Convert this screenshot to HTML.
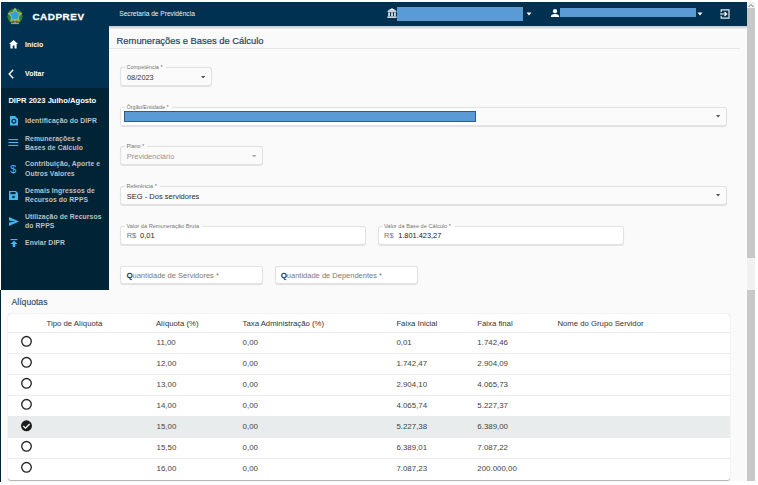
<!DOCTYPE html>
<html><head><meta charset="utf-8"><style>
html,body{margin:0;padding:0;background:#fff;width:758px;height:485px;overflow:hidden;font-family:"Liberation Sans", sans-serif;}
</style></head><body>
<div style="position:absolute;left:1px;top:2px;width:746px;height:24px;background:#013150"></div>
<div style="position:absolute;left:1px;top:26px;width:108px;height:62px;background:#013150"></div>
<div style="position:absolute;left:1px;top:88px;width:108px;height:202px;background:#012336"></div>
<div style="position:absolute;left:109px;top:26px;width:638px;height:264px;background:#fafafa"></div>
<div style="position:absolute;left:0px;top:290px;width:1.3px;height:191.5px;background:#012336"></div>
<div style="position:absolute;left:1.3px;top:290px;width:745.7px;height:191px;background:#fafafa"></div>
<div style="position:absolute;left:1.3px;top:290px;width:6.5px;height:191px;background:#fdfdfe"></div>
<div style="position:absolute;left:747px;top:2px;width:8px;height:479px;background:#f1f1f1"></div>
<div style="position:absolute;left:747px;top:8px;width:8px;height:250px;background:#c8c8c8"></div>
<div style="position:absolute;left:747px;top:290px;width:8px;height:191px;background:#c8c8c8"></div>
<svg style="position:absolute;left:748px;top:3px" width="6" height="5" viewBox="0 0 6 5"><path d="M0.5 4 L3 1.5 L5.5 4" fill="none" stroke="#777" stroke-width="1"/></svg>
<svg style="position:absolute;left:6px;top:6.5px" width="18" height="18" viewBox="0 0 18 18">
<ellipse cx="9" cy="9.2" rx="7.6" ry="7.8" fill="#23853a"/>
<polygon points="9.00,0.60 11.53,4.92 16.42,5.99 13.09,9.73 13.58,14.71 9.00,12.70 4.42,14.71 4.91,9.73 1.58,5.99 6.47,4.92" fill="#e0b028"/>
<polygon points="9.00,2.40 11.00,5.65 14.71,6.55 12.23,9.45 12.53,13.25 9.00,11.80 5.47,13.25 5.77,9.45 3.29,6.55 7.00,5.65" fill="#3cb0d0"/>
<circle cx="9" cy="8.4" r="3.3" fill="#2e9ee6"/>
<rect x="8.2" y="13" width="1.6" height="3" fill="#8ad0f0"/>
<path d="M6.3 15.6 L11.7 15.6 L9 13.6 Z" fill="#d04040"/>
<path d="M5 16.6 L13 16.6" stroke="#e0b028" stroke-width="0.9"/>
</svg>
<div style="position:absolute;left:32.4px;top:12.22px;font-size:9.9px;line-height:9.9px;color:#fff;font-weight:bold;white-space:nowrap;letter-spacing:0.55px;-webkit-text-stroke:0.3px #fff">CADPREV</div>
<div style="position:absolute;left:119.3px;top:10.81px;font-size:6.6px;line-height:6.6px;color:#eef2f5;font-weight:normal;white-space:nowrap;">Secretaria de Previdência</div>
<svg style="position:absolute;left:387px;top:8px" width="10" height="10" viewBox="0 0 10 10">
<path d="M5 0.3 L9.6 2.8 L0.4 2.8 Z" fill="#fff"/>
<rect x="0.6" y="3.2" width="8.8" height="0.9" fill="#fff"/>
<rect x="1.3" y="4.4" width="1.5" height="3.6" fill="#fff"/>
<rect x="4.25" y="4.4" width="1.5" height="3.6" fill="#fff"/>
<rect x="7.2" y="4.4" width="1.5" height="3.6" fill="#fff"/>
<rect x="0.4" y="8.4" width="9.2" height="1.4" fill="#fff"/>
</svg>
<div style="position:absolute;left:397px;top:7px;width:126px;height:13.5px;background:#5b9bd5"></div>
<svg style="position:absolute;left:526px;top:11.5px" width="6" height="4" viewBox="0 0 6 4"><path d="M0.5 0.5 L5.5 0.5 L3 3.5 Z" fill="#fff"/></svg>
<svg style="position:absolute;left:550px;top:9px" width="10" height="8" viewBox="0 0 10 8">
<circle cx="5" cy="2.2" r="2.1" fill="#fff"/>
<path d="M0.8 8 Q0.8 4.9 5 4.9 Q9.2 4.9 9.2 8 Z" fill="#fff"/>
</svg>
<div style="position:absolute;left:560px;top:8px;width:136px;height:8.6px;background:#5b9bd5"></div>
<svg style="position:absolute;left:697px;top:11.5px" width="6" height="4" viewBox="0 0 6 4"><path d="M0.5 0.5 L5.5 0.5 L3 3.5 Z" fill="#fff"/></svg>
<svg style="position:absolute;left:719.5px;top:8.5px" width="10" height="10" viewBox="0 0 10 10">
<path d="M1.2 3.3 L1.2 0.9 L9 0.9 L9 9.1 L1.2 9.1 L1.2 6.7" fill="none" stroke="#e8ecef" stroke-width="1.2"/>
<path d="M0 5 L6.6 5 M4.4 2.9 L6.6 5 L4.4 7.1" fill="none" stroke="#fff" stroke-width="1.2"/>
</svg>
<svg style="position:absolute;left:8.9px;top:40.3px" width="9" height="8.5" viewBox="0 0 9 8.5">
<path d="M4.6 0 L9 4.1 L7.6 4.1 L7.6 8.5 L5.5 8.5 L5.5 5.6 L3.7 5.6 L3.7 8.5 L1.4 8.5 L1.4 4.1 L0 4.1 Z" fill="#fff"/>
</svg>
<div style="position:absolute;left:25.1px;top:41.96px;font-size:6.9px;line-height:6.9px;color:#fff;font-weight:bold;white-space:nowrap;">Início</div>
<svg style="position:absolute;left:8px;top:68.5px" width="6" height="10" viewBox="0 0 6 10"><path d="M5.2 0.7 L1.2 5 L5.2 9.3" fill="none" stroke="#fff" stroke-width="1.4"/></svg>
<div style="position:absolute;left:25.1px;top:70.66px;font-size:6.9px;line-height:6.9px;color:#fff;font-weight:bold;white-space:nowrap;">Voltar</div>
<div style="position:absolute;left:8.4px;top:97.17px;font-size:7.6px;line-height:7.6px;color:#fff;font-weight:bold;white-space:nowrap;">DIPR 2023 Julho/Agosto</div>
<svg style="position:absolute;left:9.6px;top:116px" width="8" height="9.5" viewBox="0 0 8 9.5">
<path d="M0 0 L5 0 L8 3 L8 9.5 L0 9.5 Z" fill="#45b6ee"/>
<circle cx="3.9" cy="5.2" r="1.9" fill="none" stroke="#012336" stroke-width="1.2"/>
</svg>
<div style="position:absolute;left:25px;top:118.44px;font-size:6.8px;line-height:6.8px;color:#bcc1c6;font-weight:bold;white-space:nowrap;letter-spacing:0.1px">Identificação do DIPR</div>
<svg style="position:absolute;left:8px;top:138px" width="11" height="9" viewBox="0 0 11 9">
<rect x="0.4" y="1.1" width="9.8" height="1" fill="#55b8f0"/>
<rect x="0.4" y="4.0" width="9.8" height="1" fill="#55b8f0"/>
<rect x="0.4" y="6.9" width="9.8" height="1" fill="#55c0e0"/>
</svg>
<div style="position:absolute;left:25px;top:135.54px;font-size:6.8px;line-height:6.8px;color:#bcc1c6;font-weight:bold;white-space:nowrap;letter-spacing:0.1px">Remunerações e</div>
<div style="position:absolute;left:25px;top:144.54px;font-size:6.8px;line-height:6.8px;color:#bcc1c6;font-weight:bold;white-space:nowrap;letter-spacing:0.1px">Bases de Cálculo</div>
<div style="position:absolute;left:10.2px;top:164.29px;font-size:11px;line-height:11px;color:#45b6ee;font-weight:normal;white-space:nowrap;">$</div>
<div style="position:absolute;left:25px;top:161.44px;font-size:6.8px;line-height:6.8px;color:#bcc1c6;font-weight:bold;white-space:nowrap;letter-spacing:0.1px">Contribuição, Aporte e</div>
<div style="position:absolute;left:25px;top:170.74px;font-size:6.8px;line-height:6.8px;color:#bcc1c6;font-weight:bold;white-space:nowrap;letter-spacing:0.1px">Outros Valores</div>
<svg style="position:absolute;left:9.2px;top:191px" width="9" height="9" viewBox="0 0 9 9">
<path d="M0 0 L7 0 L9 2 L9 9 L0 9 Z" fill="#45b6ee"/>
<rect x="1.5" y="1" width="5" height="2.2" fill="#012336"/>
<circle cx="4.5" cy="6" r="1.3" fill="#012336"/>
</svg>
<div style="position:absolute;left:25px;top:187.94px;font-size:6.8px;line-height:6.8px;color:#bcc1c6;font-weight:bold;white-space:nowrap;letter-spacing:0.1px">Demais Ingressos de</div>
<div style="position:absolute;left:25px;top:197.14px;font-size:6.8px;line-height:6.8px;color:#bcc1c6;font-weight:bold;white-space:nowrap;letter-spacing:0.1px">Recursos do RPPS</div>
<svg style="position:absolute;left:9px;top:217px" width="10" height="9" viewBox="0 0 10 9">
<path d="M0 0 L10 4.5 L0 9 L0 5.6 L6.5 4.5 L0 3.4 Z" fill="#45b6ee"/>
</svg>
<div style="position:absolute;left:25px;top:214.34px;font-size:6.8px;line-height:6.8px;color:#bcc1c6;font-weight:bold;white-space:nowrap;letter-spacing:0.1px">Utilização de Recursos</div>
<div style="position:absolute;left:25px;top:223.14px;font-size:6.8px;line-height:6.8px;color:#bcc1c6;font-weight:bold;white-space:nowrap;letter-spacing:0.1px">do RPPS</div>
<svg style="position:absolute;left:10px;top:239px" width="8" height="8" viewBox="0 0 8 8">
<rect x="0.5" y="0" width="7" height="1.1" fill="#45b6ee"/>
<path d="M4 1.8 L7.5 5 L5.3 5 L5.3 8 L2.7 8 L2.7 5 L0.5 5 Z" fill="#45b6ee"/>
</svg>
<div style="position:absolute;left:25px;top:240.34px;font-size:6.8px;line-height:6.8px;color:#bcc1c6;font-weight:bold;white-space:nowrap;letter-spacing:0.1px">Enviar DIPR</div>
<div style="position:absolute;left:116.6px;top:36.34px;font-size:9.4px;line-height:9.4px;color:#23456a;font-weight:normal;white-space:nowrap;-webkit-text-stroke:0.2px #23456a">Remunerações e Bases de Cálculo</div>
<div style="position:absolute;left:109px;top:48.4px;width:631px;height:1px;background:#e6e6e6"></div>
<div style="position:absolute;left:109px;top:26px;width:638px;height:2.5px;background:linear-gradient(#c4cacc,#eef0f0)"></div>
<div style="position:absolute;left:120px;top:67px;width:91.7px;height:18.8px;background:#fbfbfb;border:1px solid #e2e2e2;border-radius:3px;box-sizing:border-box;box-shadow:0 0.5px 1px rgba(0,0,0,0.1)"></div>
<div style="position:absolute;left:125px;top:66px;width:40.5745px;height:2px;background:#fbfbfb"></div>
<div style="position:absolute;left:126.5px;top:64.94px;font-size:5.5px;line-height:5.5px;color:#737373;font-weight:normal;white-space:nowrap;">Competência *</div>
<div style="position:absolute;left:127px;top:73.54px;font-size:7.4px;line-height:7.4px;color:#333;font-weight:normal;white-space:nowrap;">08/2023</div>
<svg style="position:absolute;left:200.9px;top:75.8px" width="4.2" height="2.5" viewBox="0 0 4.2 2.5"><path d="M0 0 L4.2 0 L2.1 2.5 Z" fill="#555"/></svg>
<div style="position:absolute;left:120px;top:107px;width:607px;height:19px;background:#fbfbfb;border:1px solid #e2e2e2;border-radius:3px;box-sizing:border-box;box-shadow:0 0.5px 1px rgba(0,0,0,0.1)"></div>
<div style="position:absolute;left:121px;top:108px;width:359px;height:17px;background:#fff"></div>
<div style="position:absolute;left:125px;top:106px;width:46.696000000000005px;height:2px;background:#fbfbfb"></div>
<div style="position:absolute;left:126.5px;top:104.94px;font-size:5.5px;line-height:5.5px;color:#737373;font-weight:normal;white-space:nowrap;">Órgão/Entidade *</div>
<div style="position:absolute;left:123.5px;top:110.5px;width:352px;height:11.5px;background:#5b9bd5;border:1px solid #2e5c8a;box-sizing:border-box"></div>
<svg style="position:absolute;left:716.4px;top:115.1px" width="4.2" height="2.5" viewBox="0 0 4.2 2.5"><path d="M0 0 L4.2 0 L2.1 2.5 Z" fill="#555"/></svg>
<div style="position:absolute;left:120px;top:146.3px;width:143px;height:18.7px;background:#fafafa;border:1px solid #e2e2e2;border-radius:3px;box-sizing:border-box;box-shadow:0 0.5px 1px rgba(0,0,0,0.1)"></div>
<div style="position:absolute;left:125px;top:145.3px;width:22.2375px;height:2px;background:#fafafa"></div>
<div style="position:absolute;left:126.5px;top:144.24px;font-size:5.5px;line-height:5.5px;color:#737373;font-weight:normal;white-space:nowrap;">Plano *</div>
<div style="position:absolute;left:126.8px;top:153.25px;font-size:7.5px;line-height:7.5px;color:#959595;font-weight:normal;white-space:nowrap;">Previdenciário</div>
<svg style="position:absolute;left:251.9px;top:154.60000000000002px" width="4.2" height="2.5" viewBox="0 0 4.2 2.5"><path d="M0 0 L4.2 0 L2.1 2.5 Z" fill="#aaa"/></svg>
<div style="position:absolute;left:120px;top:186px;width:607px;height:19px;background:#fbfbfb;border:1px solid #e2e2e2;border-radius:3px;box-sizing:border-box;box-shadow:0 0.5px 1px rgba(0,0,0,0.1)"></div>
<div style="position:absolute;left:125px;top:185px;width:34.76649999999999px;height:2px;background:#fbfbfb"></div>
<div style="position:absolute;left:126.5px;top:183.94px;font-size:5.5px;line-height:5.5px;color:#737373;font-weight:normal;white-space:nowrap;">Referência *</div>
<div style="position:absolute;left:126.8px;top:192.65px;font-size:7.5px;line-height:7.5px;color:#2a2a2a;font-weight:normal;white-space:nowrap;">SEG - Dos servidores</div>
<svg style="position:absolute;left:716.4px;top:194.4px" width="4.2" height="2.5" viewBox="0 0 4.2 2.5"><path d="M0 0 L4.2 0 L2.1 2.5 Z" fill="#555"/></svg>
<div style="position:absolute;left:120px;top:226px;width:246px;height:18.5px;background:#fff;border:1px solid #e2e2e2;border-radius:3px;box-sizing:border-box;box-shadow:0 0.5px 1px rgba(0,0,0,0.1)"></div>
<div style="position:absolute;left:125px;top:225px;width:77.2607px;height:2px;background:#fff"></div>
<div style="position:absolute;left:126.5px;top:223.82px;font-size:5.65px;line-height:5.65px;color:#737373;font-weight:normal;white-space:nowrap;">Valor da Remuneração Bruta</div>
<div style="position:absolute;left:126.7px;top:231.95px;font-size:7.5px;line-height:7.5px;color:#777;font-weight:normal;white-space:nowrap;">R$</div>
<div style="position:absolute;left:140px;top:231.95px;font-size:7.5px;line-height:7.5px;color:#222;font-weight:normal;white-space:nowrap;">0,01</div>
<div style="position:absolute;left:377.5px;top:226px;width:246px;height:18.5px;background:#fff;border:1px solid #e2e2e2;border-radius:3px;box-sizing:border-box;box-shadow:0 0.5px 1px rgba(0,0,0,0.1)"></div>
<div style="position:absolute;left:382.5px;top:225px;width:71.6107px;height:2px;background:#fff"></div>
<div style="position:absolute;left:384.0px;top:223.82px;font-size:5.65px;line-height:5.65px;color:#737373;font-weight:normal;white-space:nowrap;">Valor da Base de Cálculo *</div>
<div style="position:absolute;left:384px;top:231.95px;font-size:7.5px;line-height:7.5px;color:#777;font-weight:normal;white-space:nowrap;">R$</div>
<div style="position:absolute;left:398.2px;top:232.04px;font-size:7.4px;line-height:7.4px;color:#222;font-weight:normal;white-space:nowrap;">1.801.423,27</div>
<div style="position:absolute;left:120px;top:266px;width:143px;height:17.8px;background:#fff;border:1px solid #e2e2e2;border-radius:3px;box-sizing:border-box;box-shadow:0 0.5px 1px rgba(0,0,0,0.1)"></div>
<div style="position:absolute;left:126.7px;top:271.95px;font-size:7.5px;line-height:7.5px;color:#7a7a7a;font-weight:normal;white-space:nowrap;"><span style="color:#222;-webkit-text-stroke:0.3px #222">Q</span>uantidade de Servidores *</div>
<div style="position:absolute;left:274.5px;top:265.5px;width:143px;height:18.5px;background:#fff;border:1px solid #e2e2e2;border-radius:3px;box-sizing:border-box;box-shadow:0 0.5px 1px rgba(0,0,0,0.1)"></div>
<div style="position:absolute;left:281px;top:271.95px;font-size:7.5px;line-height:7.5px;color:#7a7a7a;font-weight:normal;white-space:nowrap;"><span style="color:#222;-webkit-text-stroke:0.3px #222">Q</span>uantidade de Dependentes *</div>
<div style="position:absolute;left:11.6px;top:297.52px;font-size:8.6px;line-height:8.6px;color:#2c4b6b;font-weight:normal;white-space:nowrap;-webkit-text-stroke:0.15px #2c4b6b">Alíquotas</div>
<div style="position:absolute;left:7.8px;top:314.4px;width:722.4px;height:165.2px;background:#fff;border-radius:3px;box-shadow:0 0.6px 1px rgba(0,0,0,0.3)"></div>
<div style="position:absolute;left:46.5px;top:319.84px;font-size:7.75px;line-height:7.75px;color:#333;font-weight:normal;white-space:nowrap;">Tipo de Alíquota</div>
<div style="position:absolute;left:155.9px;top:319.84px;font-size:7.75px;line-height:7.75px;color:#333;font-weight:normal;white-space:nowrap;">Alíquota (%)</div>
<div style="position:absolute;left:242.6px;top:319.84px;font-size:7.75px;line-height:7.75px;color:#333;font-weight:normal;white-space:nowrap;">Taxa Administração (%)</div>
<div style="position:absolute;left:396.4px;top:319.84px;font-size:7.75px;line-height:7.75px;color:#333;font-weight:normal;white-space:nowrap;">Faixa Inicial</div>
<div style="position:absolute;left:477.3px;top:319.84px;font-size:7.75px;line-height:7.75px;color:#333;font-weight:normal;white-space:nowrap;">Faixa final</div>
<div style="position:absolute;left:557.4px;top:319.84px;font-size:7.75px;line-height:7.75px;color:#333;font-weight:normal;white-space:nowrap;">Nome do Grupo Servidor</div>
<div style="position:absolute;left:7.8px;top:332px;width:722.4px;height:1px;background:#ececec"></div>
<svg style="position:absolute;left:20px;top:335px" width="13" height="13" viewBox="0 0 13 13"><circle cx="6.5" cy="6.3" r="4.8" fill="none" stroke="#262626" stroke-width="1.35"/></svg>
<div style="position:absolute;left:156.6px;top:339.41px;font-size:7.9px;line-height:7.9px;color:#444;font-weight:normal;white-space:nowrap;">11,00</div>
<div style="position:absolute;left:242.6px;top:339.41px;font-size:7.9px;line-height:7.9px;color:#444;font-weight:normal;white-space:nowrap;">0,00</div>
<div style="position:absolute;left:396.4px;top:339.41px;font-size:7.9px;line-height:7.9px;color:#444;font-weight:normal;white-space:nowrap;">0,01</div>
<div style="position:absolute;left:477.3px;top:339.41px;font-size:7.9px;line-height:7.9px;color:#444;font-weight:normal;white-space:nowrap;">1.742,46</div>
<div style="position:absolute;left:7.8px;top:353px;width:722.4px;height:1px;background:#ececec"></div>
<svg style="position:absolute;left:20px;top:356px" width="13" height="13" viewBox="0 0 13 13"><circle cx="6.5" cy="6.3" r="4.8" fill="none" stroke="#262626" stroke-width="1.35"/></svg>
<div style="position:absolute;left:156.6px;top:360.41px;font-size:7.9px;line-height:7.9px;color:#444;font-weight:normal;white-space:nowrap;">12,00</div>
<div style="position:absolute;left:242.6px;top:360.41px;font-size:7.9px;line-height:7.9px;color:#444;font-weight:normal;white-space:nowrap;">0,00</div>
<div style="position:absolute;left:396.4px;top:360.41px;font-size:7.9px;line-height:7.9px;color:#444;font-weight:normal;white-space:nowrap;">1.742,47</div>
<div style="position:absolute;left:477.3px;top:360.41px;font-size:7.9px;line-height:7.9px;color:#444;font-weight:normal;white-space:nowrap;">2.904,09</div>
<div style="position:absolute;left:7.8px;top:374px;width:722.4px;height:1px;background:#ececec"></div>
<svg style="position:absolute;left:20px;top:377px" width="13" height="13" viewBox="0 0 13 13"><circle cx="6.5" cy="6.3" r="4.8" fill="none" stroke="#262626" stroke-width="1.35"/></svg>
<div style="position:absolute;left:156.6px;top:381.41px;font-size:7.9px;line-height:7.9px;color:#444;font-weight:normal;white-space:nowrap;">13,00</div>
<div style="position:absolute;left:242.6px;top:381.41px;font-size:7.9px;line-height:7.9px;color:#444;font-weight:normal;white-space:nowrap;">0,00</div>
<div style="position:absolute;left:396.4px;top:381.41px;font-size:7.9px;line-height:7.9px;color:#444;font-weight:normal;white-space:nowrap;">2.904,10</div>
<div style="position:absolute;left:477.3px;top:381.41px;font-size:7.9px;line-height:7.9px;color:#444;font-weight:normal;white-space:nowrap;">4.065,73</div>
<div style="position:absolute;left:7.8px;top:395px;width:722.4px;height:1px;background:#ececec"></div>
<svg style="position:absolute;left:20px;top:398px" width="13" height="13" viewBox="0 0 13 13"><circle cx="6.5" cy="6.3" r="4.8" fill="none" stroke="#262626" stroke-width="1.35"/></svg>
<div style="position:absolute;left:156.6px;top:402.41px;font-size:7.9px;line-height:7.9px;color:#444;font-weight:normal;white-space:nowrap;">14,00</div>
<div style="position:absolute;left:242.6px;top:402.41px;font-size:7.9px;line-height:7.9px;color:#444;font-weight:normal;white-space:nowrap;">0,00</div>
<div style="position:absolute;left:396.4px;top:402.41px;font-size:7.9px;line-height:7.9px;color:#444;font-weight:normal;white-space:nowrap;">4.065,74</div>
<div style="position:absolute;left:477.3px;top:402.41px;font-size:7.9px;line-height:7.9px;color:#444;font-weight:normal;white-space:nowrap;">5.227,37</div>
<div style="position:absolute;left:7.8px;top:416px;width:722.4px;height:1px;background:#ececec"></div>
<div style="position:absolute;left:7.8px;top:416px;width:722.4px;height:18.6px;background:#e8ecec"></div>
<div style="position:absolute;left:7.8px;top:434.6px;width:722.4px;height:1px;background:#eef0f0"></div>
<div style="position:absolute;left:7.8px;top:435.6px;width:722.4px;height:1.6px;background:#e6e8e8"></div>
<svg style="position:absolute;left:20px;top:419px" width="13" height="13" viewBox="0 0 13 13"><circle cx="6.5" cy="6.8" r="5.5" fill="#1e1e1e"/><path d="M3.3 7.0 L5.5 9.1 L9.6 5.0" fill="none" stroke="#fff" stroke-width="1.25"/></svg>
<div style="position:absolute;left:156.6px;top:423.41px;font-size:7.9px;line-height:7.9px;color:#444;font-weight:normal;white-space:nowrap;">15,00</div>
<div style="position:absolute;left:242.6px;top:423.41px;font-size:7.9px;line-height:7.9px;color:#444;font-weight:normal;white-space:nowrap;">0,00</div>
<div style="position:absolute;left:396.4px;top:423.41px;font-size:7.9px;line-height:7.9px;color:#444;font-weight:normal;white-space:nowrap;">5.227,38</div>
<div style="position:absolute;left:477.3px;top:423.41px;font-size:7.9px;line-height:7.9px;color:#444;font-weight:normal;white-space:nowrap;">6.389,00</div>
<div style="position:absolute;left:7.8px;top:437px;width:722.4px;height:1px;background:#ececec"></div>
<svg style="position:absolute;left:20px;top:440px" width="13" height="13" viewBox="0 0 13 13"><circle cx="6.5" cy="6.3" r="4.8" fill="none" stroke="#262626" stroke-width="1.35"/></svg>
<div style="position:absolute;left:156.6px;top:444.41px;font-size:7.9px;line-height:7.9px;color:#444;font-weight:normal;white-space:nowrap;">15,50</div>
<div style="position:absolute;left:242.6px;top:444.41px;font-size:7.9px;line-height:7.9px;color:#444;font-weight:normal;white-space:nowrap;">0,00</div>
<div style="position:absolute;left:396.4px;top:444.41px;font-size:7.9px;line-height:7.9px;color:#444;font-weight:normal;white-space:nowrap;">6.389,01</div>
<div style="position:absolute;left:477.3px;top:444.41px;font-size:7.9px;line-height:7.9px;color:#444;font-weight:normal;white-space:nowrap;">7.087,22</div>
<div style="position:absolute;left:7.8px;top:458px;width:722.4px;height:1px;background:#ececec"></div>
<svg style="position:absolute;left:20px;top:461px" width="13" height="13" viewBox="0 0 13 13"><circle cx="6.5" cy="6.3" r="4.8" fill="none" stroke="#262626" stroke-width="1.35"/></svg>
<div style="position:absolute;left:156.6px;top:465.41px;font-size:7.9px;line-height:7.9px;color:#444;font-weight:normal;white-space:nowrap;">16,00</div>
<div style="position:absolute;left:242.6px;top:465.41px;font-size:7.9px;line-height:7.9px;color:#444;font-weight:normal;white-space:nowrap;">0,00</div>
<div style="position:absolute;left:396.4px;top:465.41px;font-size:7.9px;line-height:7.9px;color:#444;font-weight:normal;white-space:nowrap;">7.087,23</div>
<div style="position:absolute;left:477.3px;top:465.41px;font-size:7.9px;line-height:7.9px;color:#444;font-weight:normal;white-space:nowrap;">200.000,00</div>
</body></html>
